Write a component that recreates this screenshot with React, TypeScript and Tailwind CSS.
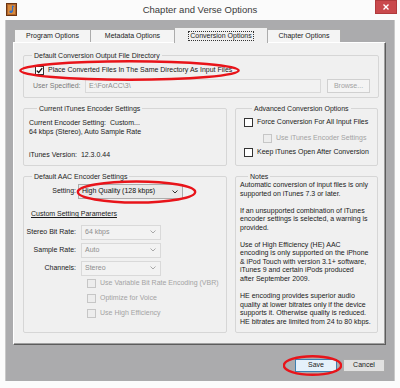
import React from "react";

function Check({ checked, disabled }: { checked?: boolean; disabled?: boolean }) {
  return (
    <span
      className={`w-[9px] h-[9px] border flex items-center justify-center shrink-0 ${
        disabled ? "border-[#c6c6c6] bg-[#ededed]" : "border-[#333333] bg-white"
      }`}
    >
      {checked && (
        <svg width="7" height="7" viewBox="0 0 7 7">
          <path d="M0.8 3.6 L2.7 5.5 L6.2 1.2" stroke="#111" strokeWidth="1.3" fill="none" />
        </svg>
      )}
    </span>
  );
}

function CheckRow({ label, checked, disabled, className = "" }: { label: string; checked?: boolean; disabled?: boolean; className?: string }) {
  return (
    <div className={`flex items-center gap-[4px] h-[10px] ${className}`}>
      <Check checked={checked} disabled={disabled} />
      <span className={`whitespace-nowrap ${disabled ? "text-[#a3a3a3]" : "text-[#1a1a1a]"}`}>{label}</span>
    </div>
  );
}

function Chevron({ color }: { color: string }) {
  return (
    <svg width="6" height="4" viewBox="0 0 6 4">
      <path d="M0.5 0.5 L3 3 L5.5 0.5" stroke={color} strokeWidth="1" fill="none" />
    </svg>
  );
}

function Combo({ value, disabled, className = "" }: { value: string; disabled?: boolean; className?: string }) {
  return (
    <div
      className={`h-[15px] flex items-center justify-between pl-[3px] pr-[4px] border ${
        disabled ? "border-[#d9d9d9] bg-[#f2f2f2] text-[#8e8e8e]" : "border-[#acacac] bg-[#e9e9e9] text-[#111]"
      } ${className}`}
    >
      <span className="whitespace-nowrap">{value}</span>
      <Chevron color={disabled ? "#a8a8a8" : "#333"} />
    </div>
  );
}

function Group({ title, className = "", children }: { title: string; className?: string; children?: React.ReactNode }) {
  return (
    <fieldset className={`border border-[#d6d6d6] rounded-[2px] min-w-0 ${className}`}>
      <legend className="ml-[8px] px-[2px] leading-[9px] text-[#1e1e1e] whitespace-nowrap">{title}</legend>
      {children}
    </fieldset>
  );
}

function Ellipse({ className }: { className: string }) {
  return (
    <svg className={`absolute pointer-events-none ${className}`} viewBox="0 0 100 100" preserveAspectRatio="none">
      <ellipse cx="50" cy="50" rx="48.5" ry="44" stroke="#e8141a" strokeWidth="2.4" fill="none" vectorEffect="non-scaling-stroke" />
    </svg>
  );
}

const notes = [
  "Automatic conversion of input files is only",
  "supported on iTunes 7.3 or later.",
  "",
  "If an unsupported combination of iTunes",
  "encoder settings is selected, a warning is",
  "provided.",
  "",
  "Use of High Efficiency (HE) AAC",
  "encoding is only supported on the iPhone",
  "& iPod Touch with version 3.1+ software,",
  "iTunes 9 and certain iPods produced",
  "after September 2009.",
  "",
  "HE encoding provides superior audio",
  "quality at lower bitrates only if the device",
  "supports it.  Otherwise quality is reduced.",
  "HE bitrates are limited from 24 to 80 kbps.",
];

export default function App() {
  return (
    <div className="relative w-[400px] h-[388px] bg-[#fbfbfb] flex flex-col overflow-hidden font-['Liberation_Sans',Arial,sans-serif] text-[7px] leading-[8.5px] text-[#1a1a1a]">
      {/* title bar */}
      <div className="h-[20px] grid grid-cols-[100px_1fr_100px] items-start shrink-0">
        <div className="pl-[6px] pt-[3px]">
          <svg width="11" height="13" viewBox="0 0 11 13">
            <rect x="0.5" y="0.5" width="10" height="12" fill="#b0642a" stroke="#6b3512" />
            <rect x="2" y="2" width="7" height="9" fill="#d88a3c" />
            <path d="M6.5 2.8 V8.6" stroke="#2f6fc9" strokeWidth="1.2" />
            <ellipse cx="5" cy="8.8" rx="1.6" ry="1.2" fill="#2f6fc9" />
            <path d="M6.5 2.8 L8.2 3.8" stroke="#2f6fc9" strokeWidth="1" />
          </svg>
        </div>
        <div className="text-center text-[9.5px] leading-[20px] text-[#3a3a3a] whitespace-nowrap">Chapter and Verse Options</div>
        <div className="flex justify-end pr-[3px]">
          <div className="w-[22px] h-[14px] bg-[#c9494c] border border-[#b03a3c] flex items-center justify-center">
            <svg width="6" height="6" viewBox="0 0 6 6">
              <path d="M0.5 0.5 L5.5 5.5 M5.5 0.5 L0.5 5.5" stroke="#fff" strokeWidth="1.4" />
            </svg>
          </div>
        </div>
      </div>

      {/* client area */}
      <div className="mx-[5px] h-[361px] bg-[#ababad] border-x border-[#c8c8c8] pt-[7px] pl-[7px] pr-[8px] flex flex-col">
        {/* tabs */}
        <div className="h-[15px] flex items-end pl-[1px] relative z-10">
          <div className="w-[77px] h-[13px] bg-[#f4f4f4] border border-b-0 border-[#acacac] flex items-center justify-center">Program Options</div>
          <div className="w-[84px] h-[13px] bg-[#f4f4f4] border border-l-0 border-b-0 border-[#acacac] flex items-center justify-center">Metadata Options</div>
          <div className="w-[94px] h-[16px] -mb-[1px] -ml-[1px] bg-[#f0f0f0] border border-b-0 border-[#acacac] flex items-center justify-center">
            <span className="border border-dotted border-[#333] px-[1px] leading-[8px]">Conversion Options</span>
          </div>
          <div className="w-[74px] h-[13px] -ml-[1px] bg-[#f4f4f4] border border-b-0 border-[#acacac] flex items-center justify-center">Chapter Options</div>
        </div>

        {/* tab page */}
        <div className="h-[303px] bg-[#f0f0f0] border-t border-l border-[#ffffff] border-r border-b border-r-[#5c5c5c] border-b-[#5c5c5c] shadow-[inset_-1px_-1px_0_#a0a0a0] pt-[8px] pl-[9px] pr-[6px] flex flex-col">
          <Group title="Default Conversion Output File Directory" className="h-[47px]">
            <CheckRow label="Place Converted Files In The Same Directory As Input Files" checked className="mt-[5px] ml-[11px]" />
            <div className="mt-[4px] flex items-center pl-[9px] pr-[8px]">
              <span className="w-[52px] text-[#7a7a7a]">User Specified:</span>
              <div className="w-[236px] h-[14px] bg-[#f2f2f2] border border-[#d9d9d9] flex items-center pl-[3px] text-[#8e8e8e]">E:\ForACC\3\</div>
              <div className="ml-[6px] w-[43px] h-[14px] bg-[#f4f4f4] border border-[#d0d0d0] flex items-center justify-center text-[#a3a3a3]">Browse...</div>
            </div>
          </Group>

          <div className="mt-[6px] grid grid-cols-[204px_143px] gap-x-[8px]">
            <Group title="Current iTunes Encoder Settings" className="h-[62px] pl-[5px]">
              <div className="mt-[6px]">Current Encoder Setting:&nbsp; Custom...</div>
              <div>64 kbps (Stereo), Auto Sample Rate</div>
              <div className="mt-[15px]">iTunes Version:&nbsp; 12.3.0.44</div>
            </Group>
            <Group title="Advanced Conversion Options" className="h-[62px] pl-[8px]">
              <CheckRow label="Force Conversion For All Input Files" className="mt-[4px]" />
              <CheckRow label="Use iTunes Encoder Settings" disabled className="mt-[6px] ml-[19px]" />
              <CheckRow label="Keep iTunes Open After Conversion" className="mt-[4px]" />
            </Group>
          </div>

          <div className="mt-[6px] grid grid-cols-[204px_143px] gap-x-[8px]">
            <Group title="Default AAC Encoder Settings" className="h-[161px]">
              <div className="mt-[3px] flex items-center">
                <span className="w-[54px] text-right pr-[2px]">Setting:</span>
                <Combo value="High Quality (128 kbps)" className="w-[105px]" />
              </div>
              <div className="mt-[11px] ml-[7px] underline">Custom Setting Parameters</div>
              <div className="mt-[6px] flex flex-col gap-[3px]">
                {[
                  ["Stereo Bit Rate:", "64 kbps"],
                  ["Sample Rate:", "Auto"],
                  ["Channels:", "Stereo"],
                ].map(([l, v]) => (
                  <div key={l} className="flex items-center">
                    <span className="w-[57px] text-right pr-[5px]">{l}</span>
                    <Combo value={v} disabled className="w-[80px]" />
                  </div>
                ))}
              </div>
              <div className="ml-[63px]">
                <CheckRow label="Use Variable Bit Rate Encoding (VBR)" disabled className="mt-[3px]" />
                <CheckRow label="Optimize for Voice" disabled className="mt-[5px]" />
                <CheckRow label="Use High Efficiency" disabled className="mt-[5px]" />
              </div>
            </Group>
            <Group title="Notes" className="h-[161px] pl-[4px]">
              <div className="leading-[8.55px]">
                {notes.map((n, i) => (
                  <div key={i} className="h-[8.55px] whitespace-nowrap">{n}</div>
                ))}
              </div>
            </Group>
          </div>
        </div>

        {/* buttons */}
        <div className="mt-[14px] flex justify-end gap-[6px] pr-[1px]">
          <div className="w-[42px] h-[13px] bg-[#e5f1fb] border border-[#3c7fb1] flex items-center justify-center">Save</div>
          <div className="w-[42px] h-[13px] bg-[#e1e1e1] border border-[#adadad] flex items-center justify-center">Cancel</div>
        </div>
      </div>

      {/* annotation ellipses */}
      <Ellipse className="left-[17px] top-[60px] w-[225px] h-[21px]" />
      <Ellipse className="left-[76px] top-[180px] w-[121px] h-[24px]" />
      <Ellipse className="left-[283px] top-[355px] w-[59px] h-[21px]" />
    </div>
  );
}
